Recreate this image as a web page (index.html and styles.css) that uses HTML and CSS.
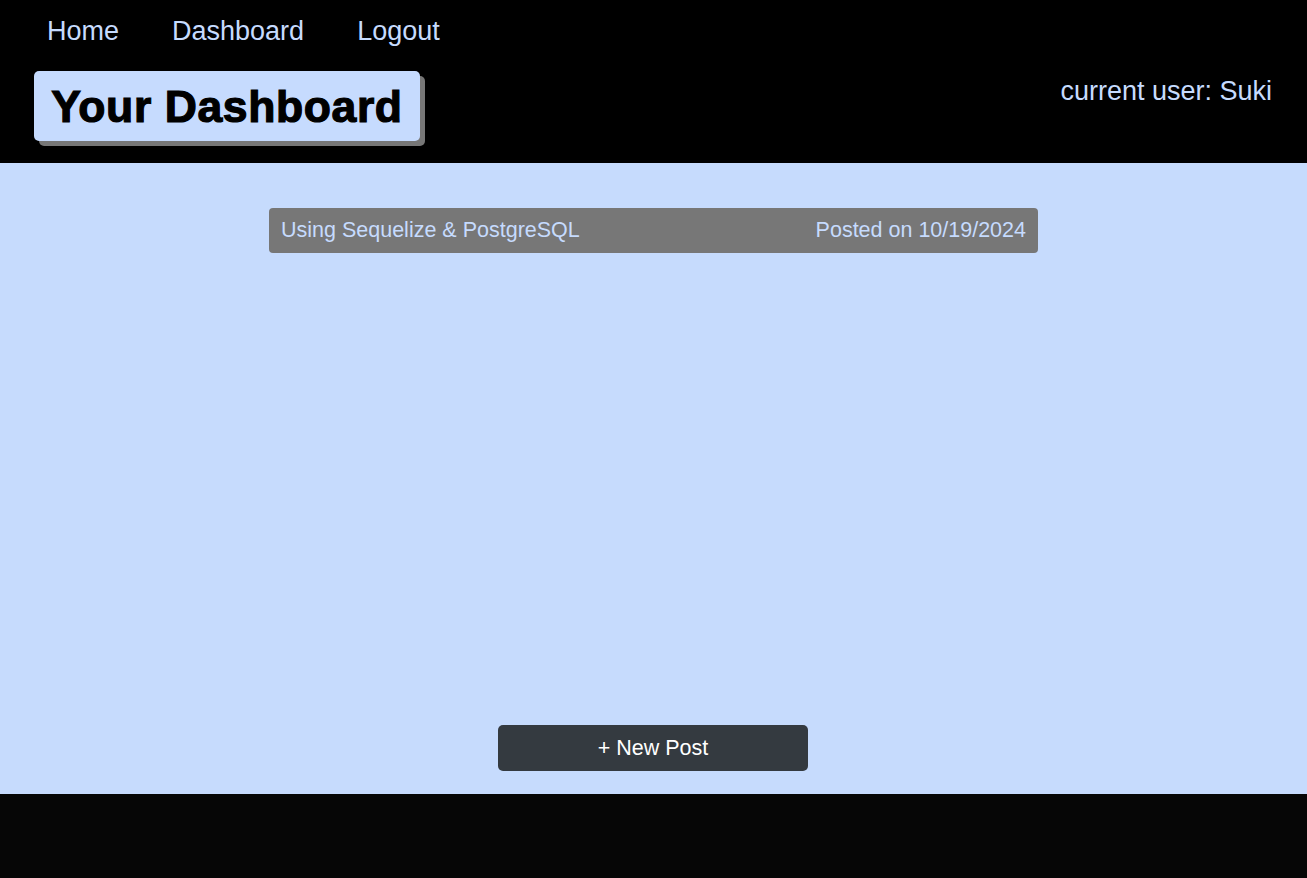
FILE: index.html
```html
<!DOCTYPE html>
<html>
<head>
<meta charset="utf-8">
<title>Your Dashboard</title>
<link rel="stylesheet" href="styles.css">
</head>
<body>
<header class="header">
  <nav class="nav">
    <a href="#" class="nav-link">Home</a>
    <a href="#" class="nav-link">Dashboard</a>
    <a href="#" class="nav-link">Logout</a>
  </nav>
  <div class="header-row">
    <h1 class="title">Your Dashboard</h1>
    <div class="current-user">current user: Suki</div>
  </div>
</header>
<main class="main">
  <div class="post">
    <span class="post-title">Using Sequelize &amp; PostgreSQL</span>
    <span class="post-date">Posted on 10/19/2024</span>
  </div>
  <div class="spacer"></div>
  <button class="new-post">+ New Post</button>
</main>
<footer class="footer"></footer>
</body>
</html>
```
FILE: styles.css
```css
* { box-sizing: border-box; }
html, body { margin: 0; padding: 0; }
body {
  font-family: "Liberation Sans", Arial, sans-serif;
  background: #000;
  height: 878px;
  display: flex;
  flex-direction: column;
}
.header {
  background: #000;
  height: 163px;
  padding: 0 35px 0 34px;
}
.nav {
  display: flex;
  gap: 53px;
  padding: 15px 0 0 13px;
  height: 60px;
}
.nav-link {
  color: #c6dbfe;
  text-decoration: none;
  font-size: 27px;
  line-height: 32px;
}
.header-row {
  display: flex;
  justify-content: space-between;
  align-items: flex-start;
  margin-top: 11px;
}
.title {
  margin: 0;
  background: #c6dbfe;
  color: #000;
  font-size: 44.5px;
  font-weight: 700;
  -webkit-text-stroke: 1.2px #000;
  letter-spacing: 0.6px;
  width: 386px;
  height: 70px;
  line-height: 72px;
  text-align: center;
  border-radius: 5px;
  box-shadow: 5px 5px 0 #777;
}
.current-user {
  color: #c6dbfe;
  font-size: 27px;
  line-height: 32px;
  margin-top: 4px;
}
.main {
  background: #c6dbfd;
  height: 631px;
  display: flex;
  flex-direction: column;
  align-items: center;
  padding: 45px 0 23px;
}
.post {
  width: 769px;
  height: 45px;
  background: #777;
  border-radius: 4px;
  display: flex;
  justify-content: space-between;
  align-items: center;
  padding: 0 12px;
  color: #c6dbfe;
  font-size: 21.5px;
}
.spacer { flex: 1; }
.new-post {
  width: 310px;
  height: 46px;
  margin-right: 1px;
  background: #343a40;
  color: #fff;
  border: none;
  border-radius: 5px;
  font-family: "Liberation Sans", Arial, sans-serif;
  font-size: 21.5px;
  padding: 0;
}
.footer {
  flex: 1;
  background: #060606;
}
```
